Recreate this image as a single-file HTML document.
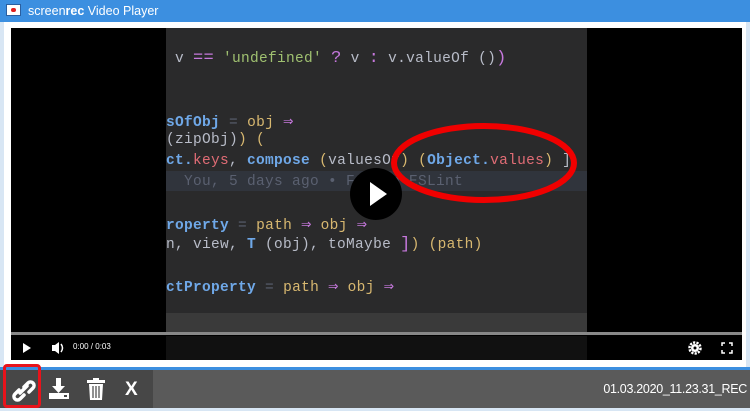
<!DOCTYPE html>
<html><head><style>
*{margin:0;padding:0;box-sizing:border-box}
body{width:750px;height:411px;background:#fff;position:relative;overflow:hidden;font-family:"Liberation Sans",sans-serif}
.a{position:absolute}
.code{font-family:"Liberation Mono",monospace;font-size:14.5px;letter-spacing:0.3px;white-space:pre;position:absolute;left:0}
.k{color:#6fa8e8;font-weight:bold}.y{color:#d8b870}.p{color:#c678dd;font-size:17px}.g{color:#9fc070}.w{color:#b8bcc8}.r{color:#e06c75}.gr{color:#5a6070}
</style></head><body>
<div class="a" style="left:0;top:0;width:750px;height:22px;background:#3c8fe0"></div>
<div class="a" style="left:6px;top:4px;width:15px;height:12px;background:#fff;border:1px solid #2a5fa0"></div>
<div class="a" style="left:11px;top:8px;width:5px;height:4px;background:#e02020;border-radius:2px"></div>
<div class="a" style="left:28px;top:4px;color:#fff;font-size:12.5px">screen<b>rec</b> Video Player</div>
<div class="a" style="left:0;top:22px;width:4px;height:346px;background:#d8e6f4"></div>
<div class="a" style="left:746px;top:22px;width:4px;height:346px;background:#d8e6f4"></div>
<div class="a" style="left:11px;top:28px;width:731px;height:332px;background:#000"></div>
<div class="a" style="left:166px;top:28px;width:421px;height:304px;background:#2a2a2b;overflow:hidden">
<div class="a" style="left:0;top:285px;width:421px;height:20px;background:#3a3a3a"></div>
<div class="a" style="left:0;top:143px;width:421px;height:20px;background:#30343c"></div>
<div class="code" style="top:21px"><span class="w"> v </span><span class="p">==</span> <span class="g">'undefined'</span> <span class="p">?</span><span class="w"> v </span><span class="p">:</span><span class="w"> v.valueOf ()</span><span class="p">)</span></div>
<div class="code" style="top:83px"><span class="k">sOfObj</span> <span class="gr">=</span> <span class="y">obj</span> <span class="p">⇒</span></div>
<div class="code" style="top:104px"><span class="w">(zipObj)</span><span class="y">) (</span></div>
<div class="code" style="top:125px"><span class="k">ct.</span><span class="r">keys</span><span class="w">, </span><span class="k">compose</span> <span class="y">(</span><span class="w">valuesOf</span><span class="y">) (</span><span class="k">Object.</span><span class="r">values</span><span class="y">)</span><span class="w"> ]</span></div>
<div class="code" style="top:146px"><span class="gr">  You, 5 days ago • Fix to ESLint</span></div>
<div class="code" style="top:186px"><span class="k">roperty</span> <span class="gr">=</span> <span class="y">path</span> <span class="p">⇒</span> <span class="y">obj</span> <span class="p">⇒</span></div>
<div class="code" style="top:207px"><span class="w">n, view, </span><span class="k">T</span> <span class="w">(obj), toMaybe </span><span class="p">]</span><span class="y">) (path)</span></div>
<div class="code" style="top:248px"><span class="k">ctProperty</span> <span class="gr">=</span> <span class="y">path</span> <span class="p">⇒</span> <span class="y">obj</span> <span class="p">⇒</span></div>
</div>
<div class="a" style="left:166px;top:336px;width:421px;height:24px;background:#111"></div>
<svg class="a" style="left:0;top:0" width="750" height="411">
<ellipse cx="484" cy="163" rx="90" ry="37" fill="none" stroke="#f00000" stroke-width="6"/>
<circle cx="376" cy="194" r="26" fill="#000"/>
<path d="M370 182 L370 206 L387 194Z" fill="#fff"/>
<rect x="11" y="332" width="731" height="3" fill="#888"/>
<path d="M23 343 L23 353 L31 348Z" fill="#fff"/>
<path d="M52 345 h3 l4 -3 v12 l-4 -3 h-3z" fill="#fff"/><path d="M61 344 q3 4 0 8" stroke="#fff" fill="none" stroke-width="1.5"/>
<circle cx="695" cy="348" r="5.5" fill="none" stroke="#fff" stroke-width="2.5" stroke-dasharray="2.2 1.2"/><circle cx="695" cy="348" r="4" fill="#fff"/><circle cx="695" cy="348" r="1.5" fill="#000"/>
<path d="M722 346v-3h3M729 343h3v3M732 350v3h-3M725 353h-3v-3" stroke="#fff" stroke-width="1.5" fill="none"/>
</svg>
<div class="a" style="left:73px;top:342px;color:#fff;font-size:8px">0:00 / 0:03</div>
<div class="a" style="left:0;top:367px;width:750px;height:3px;background:#3c8fe0"></div>
<div class="a" style="left:0;top:370px;width:750px;height:38px;background:#5a5a5a"></div>
<div class="a" style="left:0;top:370px;width:153px;height:38px;background:#474747"></div>
<div class="a" style="left:0;top:408px;width:750px;height:3px;background:#d8e6f4"></div>
<div class="a" style="left:3px;top:364px;width:38px;height:44px;border:3px solid #e8131b;border-radius:4px"></div>
<svg class="a" style="left:0;top:370px" width="160" height="38">
<g stroke="#fff" stroke-width="3.5" fill="none" stroke-linecap="round">
<path d="M19 20 l-4 4 a3.5 3.5 0 0 0 5 5 l4 -4"/><path d="M24 17 l4 -4 a3.5 3.5 0 0 1 5 5 l-4 4"/><path d="M20 23 l7 -7"/>
</g>
<path d="M56 8h5v8h4l-6.5 7l-6.5 -7h4z" fill="#fff"/><rect x="49" y="23" width="20" height="6" fill="#fff"/><rect x="64" y="25" width="3" height="2" fill="#474747"/>
<rect x="87" y="10" width="18" height="3" fill="#fff"/><rect x="93" y="8" width="6" height="2" fill="#fff"/>
<path d="M89 14h14l-1 16h-12z" fill="#fff"/><path d="M93 16v12M96 16v12M99 16v12" stroke="#474747" stroke-width="1.2"/>
</svg>
<div class="a" style="left:125px;top:379px;color:#fff;font-size:19px;font-weight:bold">X</div>
<div class="a" style="right:3px;top:382px;color:#fff;font-size:12.5px;letter-spacing:-0.3px">01.03.2020_11.23.31_REC</div>
</body></html>
